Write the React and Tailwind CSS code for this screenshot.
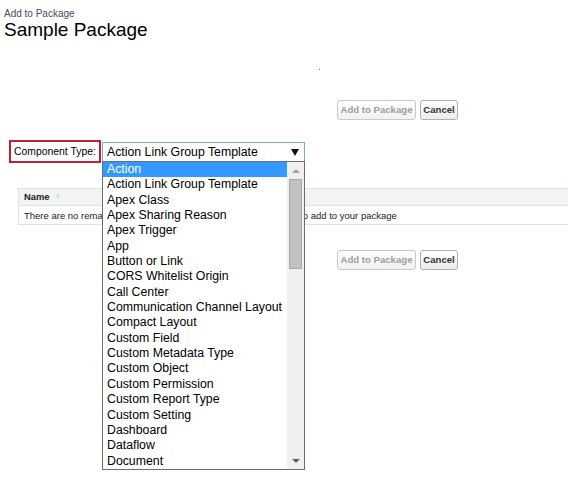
import React from "react";

const items = [
  "Action",
  "Action Link Group Template",
  "Apex Class",
  "Apex Sharing Reason",
  "Apex Trigger",
  "App",
  "Button or Link",
  "CORS Whitelist Origin",
  "Call Center",
  "Communication Channel Layout",
  "Compact Layout",
  "Custom Field",
  "Custom Metadata Type",
  "Custom Object",
  "Custom Permission",
  "Custom Report Type",
  "Custom Setting",
  "Dashboard",
  "Dataflow",
  "Document",
];

function Buttons() {
  return (
    <div className="flex gap-[4px] pl-[337px]">
      <button className="h-[20px] w-[79px] rounded-[3px] border border-[#c9c9c9] bg-gradient-to-b from-white to-[#f1f1f1] text-[9.6px] font-bold text-[#9d9d9d] leading-none">
        Add to Package
      </button>
      <button className="h-[20px] w-[38px] rounded-[3px] border border-[#b0b0b0] bg-gradient-to-b from-white to-[#ececec] text-[9.6px] font-bold text-[#333] leading-none">
        Cancel
      </button>
    </div>
  );
}

export default function App() {
  return (
    <div
      className="relative w-[568px] h-[487px] overflow-hidden bg-white text-black"
      style={{ fontFamily: '"Liberation Sans", Arial, sans-serif' }}
    >
      <div className="pt-[8px] pl-[4px]">
        <div className="text-[10px] leading-[11px] text-[#4a4a56]">Add to Package</div>
        <div className="text-[19px] leading-[22px] text-black">Sample Package</div>
      </div>

      <div className="mt-[59px]">
        <Buttons />
      </div>

      <div className="mt-[20px] flex items-start">
        <div className="ml-[9px] flex h-[23px] w-[92px] items-center border-2 border-[#c5202e] pl-[3px] text-[10.4px] text-black">
          Component Type:
        </div>
        <div className="ml-[1px] mt-[2px] flex h-[20px] w-[203px] items-center justify-between border border-[#7fa6d9] bg-white pl-[4px] pr-[5px] text-[12.3px]">
          <span>Action Link Group Template</span>
          <svg width="8" height="7" viewBox="0 0 8 7">
            <path d="M0 0 H8 L4 7 Z" fill="#111" />
          </svg>
        </div>
      </div>

      <div className="mt-[25px] ml-[18px] w-[560px]">
        <div className="flex h-[18px] items-center border-y border-[#e0e3e5] border-l bg-[#f2f3f3] pl-[5px] text-[9.4px] font-bold text-[#222]">
          Name
          <span className="ml-[6px] text-[8px] font-normal text-[#aaa]">↑</span>
        </div>
        <div className="flex h-[19px] items-center border-b border-l border-[#e0e3e5] pl-[5px] pt-[2px] text-[9.5px] text-[#222]">
          There are no remaining components of this type available for you to add to your package
        </div>
      </div>

      <div className="mt-[25px]">
        <Buttons />
      </div>

      <span className="absolute left-[319px] top-[69px] h-[1px] w-[1px] bg-[#777]" />

      <div className="absolute left-[102px] top-[161px] flex h-[309px] w-[203px] border border-[#6e6e6e] bg-white">
        <div className="flex-1">
          {items.map((it, i) => (
            <div
              key={it}
              className={
                "h-[15.35px] pl-[4px] text-[12.3px] leading-[15.35px] whitespace-nowrap " +
                (i === 0 ? "bg-[#3399ff] text-white" : "text-black")
              }
            >
              {it}
            </div>
          ))}
        </div>
        <div className="flex w-[17px] flex-col items-center bg-[#f0f0f0]">
          <div className="flex h-[17px] w-full items-center justify-center">
            <svg width="8" height="4" viewBox="0 0 8 4">
              <path d="M0 4 L4 0 L8 4 Z" fill="#a3a3a3" />
            </svg>
          </div>
          <div className="h-[90px] w-[13px] border border-[#a8a8a8] bg-[#c1c1c1]" />
          <div className="flex-1" />
          <div className="flex h-[17px] w-full items-center justify-center">
            <svg width="8" height="4" viewBox="0 0 8 4">
              <path d="M0 0 L8 0 L4 4 Z" fill="#606060" />
            </svg>
          </div>
        </div>
      </div>
    </div>
  );
}
